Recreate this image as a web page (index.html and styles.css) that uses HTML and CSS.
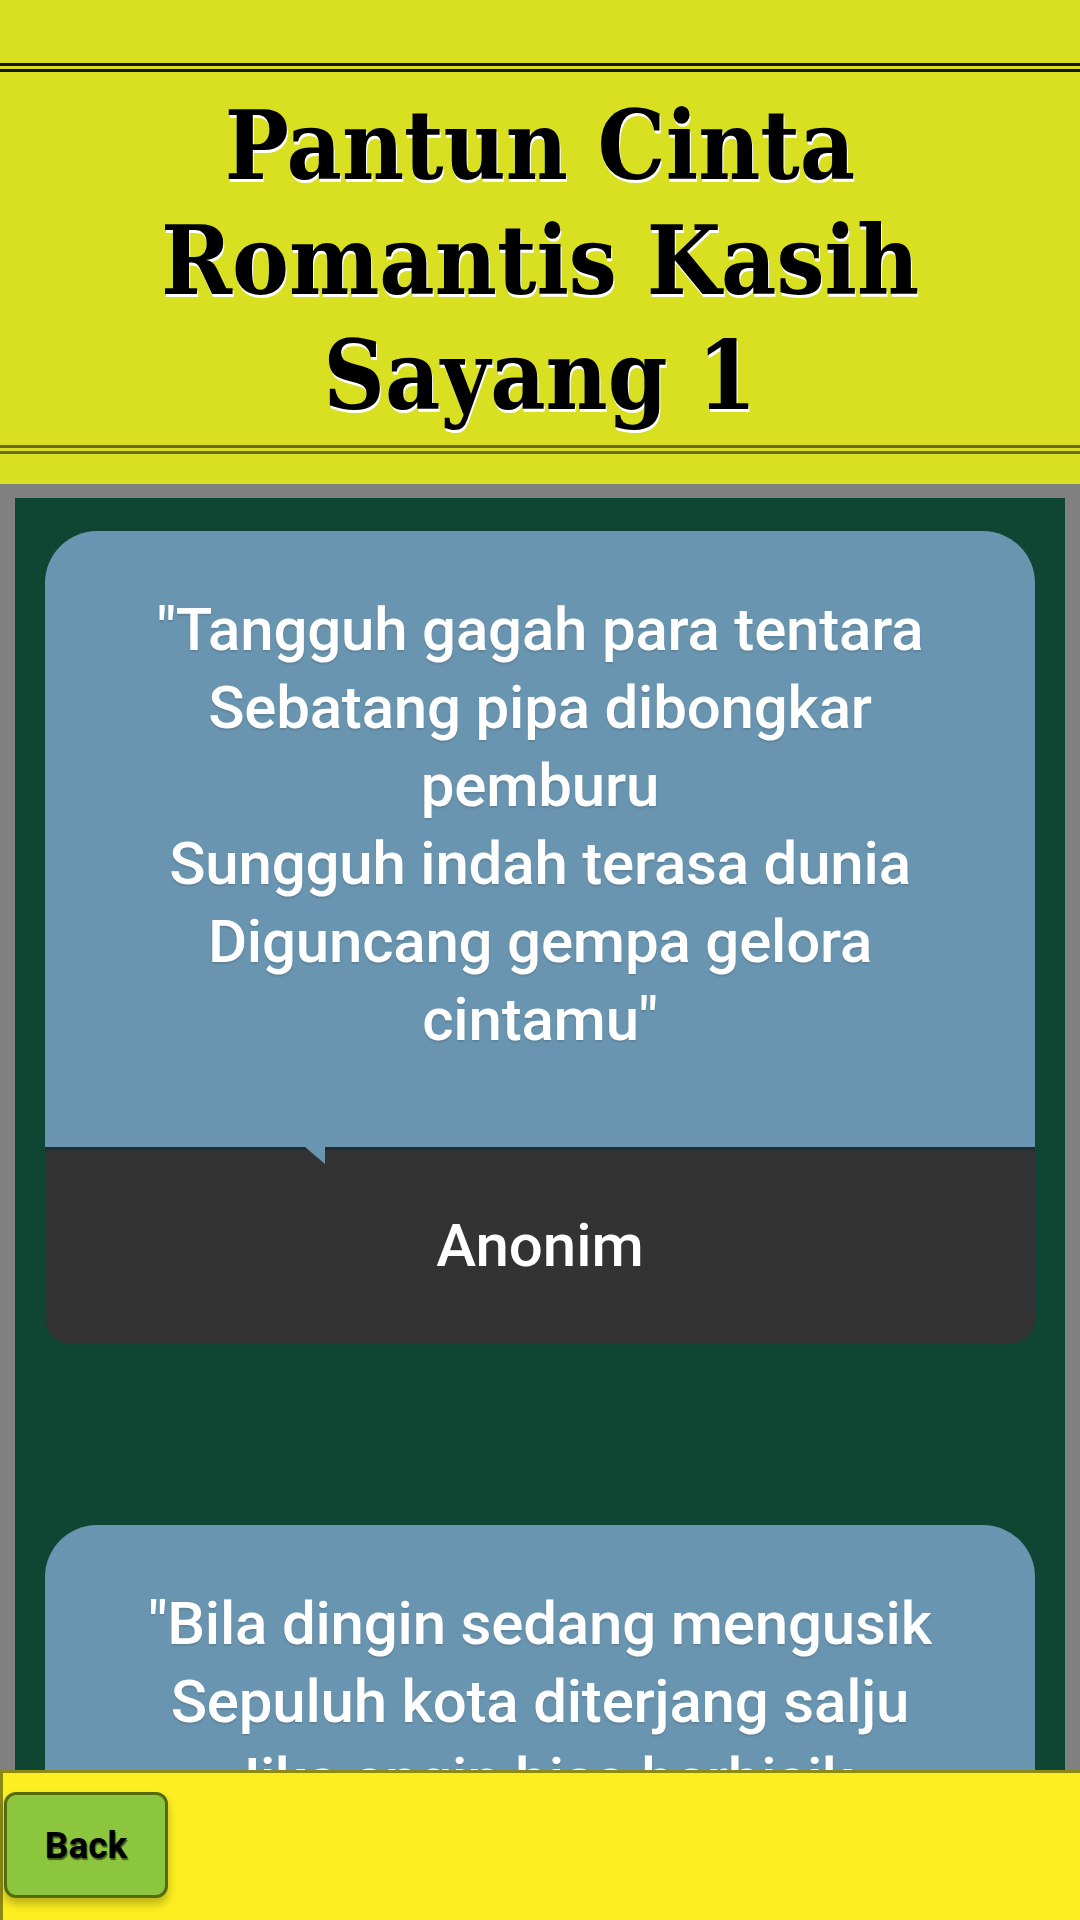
FILE: index.html
```html
<!DOCTYPE html>
<html>
<head>
<meta charset="utf-8">
<link rel="stylesheet" href="styles.css">
</head>
<body>
<header class="header">
  <div class="header-inner">
    <h1 class="title">Pantun Cinta<br>Romantis Kasih<br>Sayang 1</h1>
  </div>
</header>
<main class="main">
  <div class="panel">
    <div class="card">
      <div class="quote">"Tangguh gagah para tentara<br>Sebatang pipa dibongkar pemburu<br>Sungguh indah terasa dunia<br>Diguncang gempa gelora cintamu"</div>
      <div class="author">Anonim</div>
    </div>
    <div class="card">
      <div class="quote">"Bila dingin sedang mengusik<br>Sepuluh kota diterjang salju<br>Jika angin bisa berbisik<br>Aku ingin bilang rindu padamu"</div>
      <div class="author">Anonim</div>
    </div>
  </div>
</main>
<footer class="footer">
  <button class="back">Back</button>
</footer>
</body>
</html>
```

FILE: styles.css
```css
html, body {
  margin: 0;
  padding: 0;
}
body {
  width: 1080px;
  height: 1920px;
  overflow: hidden;
  background: #808080;
  font-family: Roboto, "Liberation Sans", sans-serif;
}
.header {
  background: #d9e021;
  padding: 63px 0 30px;
}
.header-inner {
  border-top: 9px double #151510;
  border-bottom: 9px double #6b6b1f;
  padding: 16px 0 12px;
}
.title {
  margin: 0;
  text-align: center;
  font-family: "DejaVu Serif", serif;
  font-stretch: condensed;
  font-weight: bold;
  font-size: 95px;
  line-height: 115px;
  color: #000;
  text-shadow: 1px 3px 0 #fff;
}
.main {
  background: #808080;
  padding: 14px 15px 0;
}
.panel {
  background: #0f4533;
  padding: 33px 30px 200px;
  display: flex;
  flex-direction: column;
  gap: 181px;
}
.card {
  display: flex;
  flex-direction: column;
}
.quote {
  background: #6a95b0;
  border-radius: 52px 52px 0 0;
  padding: 60px 70px 88px;
  text-align: center;
  color: #fff;
  font-size: 60px;
  font-weight: 500;
  line-height: 78px;
  letter-spacing: -0.2px;
  text-shadow: 0 2px 2px rgba(0, 0, 0, 0.12);
}
.author {
  position: relative;
  background: #333333;
  border-radius: 0 0 26px 26px;
  height: 197px;
  display: flex;
  align-items: center;
  justify-content: center;
  color: #fff;
  font-size: 60px;
  font-weight: 500;
  box-shadow: inset 0 3px 2px rgba(20, 40, 55, 0.6);
}
.author::before {
  content: "";
  position: absolute;
  left: 260px;
  top: 0;
  width: 20px;
  height: 17px;
  background: #6a95b0;
  clip-path: polygon(0 0, 100% 0, 100% 100%);
}
.footer {
  position: fixed;
  left: 0;
  right: 0;
  bottom: 0;
  background: #fcee21;
  border-top: 3px solid #8c8a12;
  border-left: 3px solid #8c8a12;
  box-sizing: border-box;
  height: 150px;
  padding: 19px 0 0 1px;
}
.back {
  display: block;
  width: 164px;
  height: 106px;
  background: #8cc63f;
  border: 3px solid #566a0e;
  border-radius: 12px;
  box-shadow: 0 6px 8px rgba(0, 0, 0, 0.25);
  font-family: Roboto, "Liberation Sans", sans-serif;
  font-weight: bold;
  font-size: 37px;
  color: #000;
  text-shadow: 1px 2px 1px rgba(0, 0, 0, 0.55);
  padding: 0;
}
```
